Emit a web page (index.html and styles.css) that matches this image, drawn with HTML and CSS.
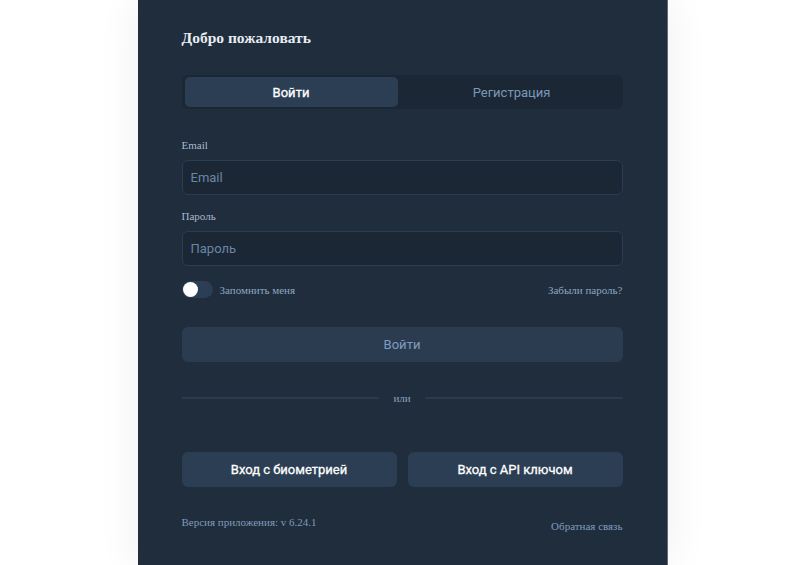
FILE: index.html
```html
<!DOCTYPE html>
<html lang="ru">
<head>
    <meta charset="UTF-8">
    <title>Добро пожаловать</title>
    <link rel="stylesheet" href="styles.css">
</head>
<body>
    <div class="page">
        <div class="card">
            <h2 class="title">Добро пожаловать</h2>

            <div class="tabs">
                <button class="tab active">Войти</button>
                <button class="tab">Регистрация</button>
            </div>

            <label class="field-label" for="email">Email</label>
            <input class="field" type="text" id="email" placeholder="Email">

            <label class="field-label second" for="password">Пароль</label>
            <input class="field" type="password" id="password" placeholder="Пароль">

            <div class="options">
                <label class="remember">
                    <span class="switch"><span class="knob"></span></span>
                    Запомнить меня
                </label>
                <a class="link" href="#">Забыли пароль?</a>
            </div>

            <button class="submit">Войти</button>

            <div class="divider">
                <span class="line"></span>
                <span class="or">или</span>
                <span class="line"></span>
            </div>

            <div class="alt-buttons">
                <button class="alt">Вход с биометрией</button>
                <button class="alt">Вход с API ключом</button>
            </div>

            <div class="footer">
                <span class="version">Версия приложения: v 6.24.1</span>
                <a class="link feedback" href="#">Обратная связь</a>
            </div>
        </div>
    </div>
</body>
</html>
```

FILE: styles.css
```css
body {
    margin: 0;
    background-color: #fff;
    font-family: "Liberation Serif", serif;
    overflow: hidden;
}

.page {
    display: flex;
    justify-content: center;
    padding-left: 5px;
    height: 565px;
}

.card {
    width: 441px;
    padding: 28px 44px 40px;
    background-color: #1f2d3d;
    box-shadow: 0 0 40px rgba(0, 0, 0, 0.07);
    border-right: 1px solid #5d6a78;
}

.title {
    margin: 0;
    font-size: 15.5px;
    line-height: 20px;
    font-weight: bold;
    color: #e8edf2;
}

.tabs {
    display: grid;
    grid-template-columns: 213px 1fr;
    gap: 6px;
    margin-top: 27px;
    padding: 2px 3px;
    background-color: #1b2735;
    border-radius: 6px;
}

.tab {
    height: 30px;
    border: none;
    border-radius: 5px;
    background: none;
    font-family: Roboto, sans-serif;
    font-size: 13px;
    color: #7b98b8;
}

/* no Roboto Medium installed, so a thin stroke stands in for weight 500 */
.tab.active {
    background-color: #2c3e53;
    color: #fff;
    -webkit-text-stroke: 0.3px #fff;
}

.field-label {
    display: block;
    margin-top: 29px;
    margin-bottom: 8px;
    font-size: 11px;
    line-height: 14px;
    color: #a7bacd;
}

.field-label.second {
    margin-top: 14px;
}

.field {
    display: block;
    box-sizing: border-box;
    width: 100%;
    height: 35px;
    padding: 0 8px;
    background-color: #1b2735;
    border: 1px solid #2b3d50;
    border-radius: 6px;
    font-family: Roboto, sans-serif;
    font-size: 13px;
    color: #dfe7ef;
}

.field::placeholder {
    color: #6a86a6;
}

.options {
    display: flex;
    justify-content: space-between;
    align-items: center;
    margin-top: 15px;
    height: 17px;
}

.remember {
    display: flex;
    align-items: center;
    gap: 7px;
    font-size: 11px;
    color: #8ea6c0;
}

.switch {
    display: flex;
    align-items: center;
    width: 31px;
    height: 17px;
    border-radius: 9px;
    background-color: #2c3e53;
}

.knob {
    width: 15px;
    height: 15px;
    margin-left: 1px;
    border-radius: 50%;
    background-color: #fff;
}

.link {
    font-size: 11px;
    color: #8ea6c0;
    text-decoration: none;
}

.submit {
    display: block;
    width: 100%;
    height: 35px;
    margin-top: 29px;
    border: none;
    border-radius: 6px;
    background-color: #2b3c51;
    font-family: Roboto, sans-serif;
    font-size: 13px;
    color: #7f9cbf;
}

.divider {
    display: flex;
    align-items: center;
    gap: 14px;
    margin-top: 29px;
    height: 14px;
}

.line {
    flex: 1;
    height: 2px;
    background-color: #2a3b4f;
}

.or {
    font-size: 11px;
    color: #8aa3bd;
}

.alt-buttons {
    display: grid;
    grid-template-columns: 1fr 1fr;
    gap: 11px;
    margin-top: 47px;
}

.alt {
    height: 35px;
    border: none;
    border-radius: 6px;
    background-color: #2c3e53;
    font-family: Roboto, sans-serif;
    font-size: 13px;
    color: #fff;
    -webkit-text-stroke: 0.3px #fff;
}

.footer {
    display: flex;
    justify-content: space-between;
    align-items: flex-end;
    margin-top: 28px;
}

.version {
    font-size: 11px;
    line-height: 14px;
    color: #7f9bbb;
    padding-bottom: 4px;
}

.feedback {
    line-height: 14px;
    color: #7f9bbb;
}
```
